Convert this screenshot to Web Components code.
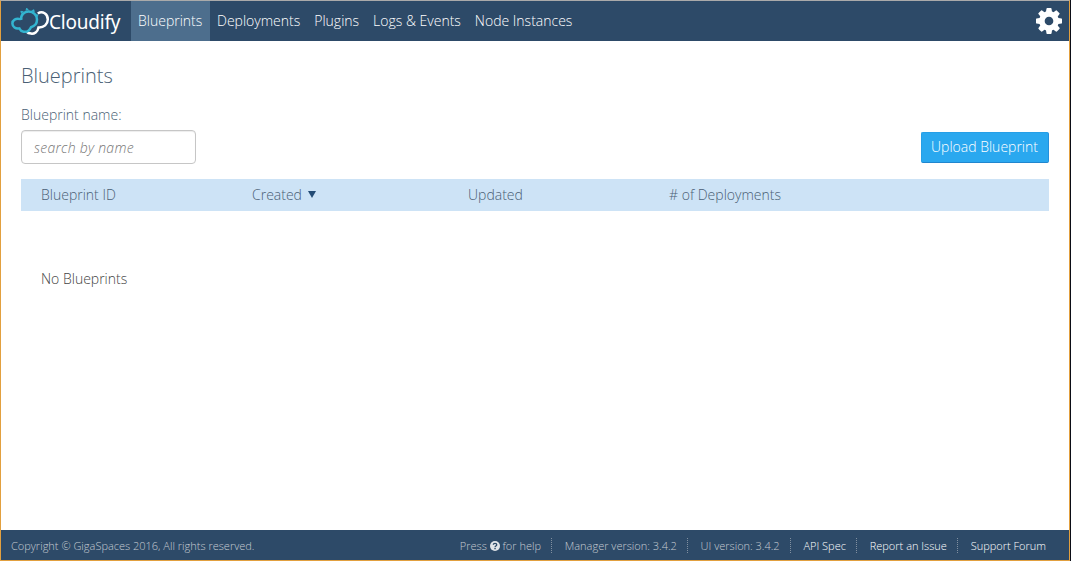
<!DOCTYPE html>
<html lang="en">
<head>
<meta charset="utf-8">
<title>Cloudify</title>
<style>
html,body{margin:0;height:100%;overflow:hidden;background:#fff}
body{font-family:"Open Sans","Noto Sans",sans-serif;font-weight:300;font-size:14px;line-height:20px;color:#4a5f75}
</style>
</head>
<body>
<cloudify-app></cloudify-app>
<script>
function define(name, html) {
  const template = document.createElement('template');
  template.innerHTML = html;
  customElements.define(name, class extends HTMLElement {
    connectedCallback() {
      if (this.shadowRoot) return;
      this.attachShadow({ mode: 'open' }).append(template.content.cloneNode(true));
    }
  });
}

define('cloudify-logo', `
<style>
:host{display:flex;align-items:center;width:120px;height:40px;padding-left:10px;color:#fff;box-sizing:content-box}
svg{flex:none;width:39px;height:30px}
span{font:400 19px/38px "Noto Sans","Open Sans",sans-serif;margin:2px 0 0 -1px;letter-spacing:-.2px}
</style>
<svg viewBox="0 0 39 30" fill="none">
  <path d="M26.800 7.500C31.500 4.400 37 8 36.800 13.500c-.1 4.700-3.800 8.300-9.300 8-.9 4.500-4.200 6.500-7.500 6.100-2-.2-3.400-.9-4.400-2" stroke="#fff" stroke-width="2.500"/>
  <path d="M10.300 14C9.300 8.800 13.300 5.500 17.700 5.500c4.700 0 8.300 3.600 8.300 8 0 4.300-2.800 6.800-6 7.700-1.500 3.200-4.200 5-7.300 4.500-2-.4-3.500-1.500-4.300-3.300C4.700 23.300 1.400 21 1.400 17.500c0-3.500 3.300-5.500 7.800-4.400" stroke="#33b5d1" stroke-width="2.500"/>
  <path d="M10.500 7.500 9.800 5.300l2.700.4M14.900 4.500l.8-2.400 1.900 2.200M20.500 4.900l2.400-1.200.4 2.500M25 8.700l2 .2-1 1.900" fill="#33b5d1" stroke="#33b5d1" stroke-width=".8"/>
</svg><span>Cloudify</span>`);

define('nav-item', `
<style>
:host{display:block;box-sizing:border-box;height:40px;padding:0 7px;line-height:39px;color:#fff;font-size:14px;white-space:nowrap}
:host([active]){background:#4d6e8d;width:79px}
</style><slot></slot>`);

define('gear-icon', `
<style>:host{display:block;width:26px;height:26px}svg{display:block}</style>
<svg width="26" height="26" viewBox="0 0 1536 1536"><path fill="#fff" d="M1024 768q0-106-75-181t-181-75-181 75-75 181 75 181 181 75 181-75 75-181zm512-109v222q0 12-8 23t-20 13l-185 28q-19 54-39 91 35 50 107 138 10 12 10 25t-9 23q-27 37-99 108t-94 71q-12 0-26-9l-138-108q-44 23-91 38-16 136-29 186-7 28-36 28H657q-14 0-24.500-8.500T621 1506l-28-184q-49-16-90-37l-141 107q-10 9-25 9-14 0-25-11-126-114-165-168-7-10-7-23 0-12 8-23 15-21 51-66.500t54-70.500q-27-50-41-99L29 913q-13-2-21-12.500T0 877V655q0-12 8-23t19-13l186-28q14-46 39-92-40-57-107-138-10-12-10-24 0-10 9-23 26-36 98.500-107.500T337 135q13 0 26 10l138 107q44-23 91-38 16-136 29-186 7-28 36-28h222q14 0 24.500 8.500T915 30l28 184q49 16 90 37l142-107q9-9 24-9 13 0 25 10 129 119 165 170 7 8 7 22 0 12-8 23-15 21-51 66.500t-54 70.500q26 50 41 98l183 28q13 2 21 12.500t8 23.500z"/></svg>`);

define('app-header', `
<style>
:host{display:flex;height:40px;flex:none;background:#2d4a68}
nav{display:flex;flex:1}
gear-icon{margin:7px 7px 0 0}
</style>
<cloudify-logo></cloudify-logo>
<nav><slot></slot></nav>
<gear-icon></gear-icon>`);

define('search-field', `
<style>
:host{display:block;width:175px}
label{display:block;height:20px;margin-bottom:5px}
input{display:block;box-sizing:border-box;width:175px;height:34px;border:1px solid #c6c6c6;border-radius:4px;padding:0 12px;background:#fff;font:inherit;outline:0;box-shadow:inset 0 1px 1px rgba(0,0,0,.075)}
input::placeholder{color:#777;opacity:1;font-style:italic;letter-spacing:.27px}
</style>
<label><slot></slot></label><input type="text" placeholder="search by name">`);

define('action-button', `
<style>
:host{display:block}
button{display:block;box-sizing:border-box;width:128px;height:31px;padding:0 1px 2px 0;border:1px solid #269fe7;border-bottom-color:#2086ce;border-right-color:#2490dc;border-radius:2px;background:#2aa8ef;color:#fff;font:inherit;line-height:27px}
</style><button><slot></slot></button>`);

define('blueprint-table', `
<style>
:host{display:block}
.head{display:grid;grid-template-columns:211px 216px 201px 1fr;height:32px;padding-left:20px;background:#cde3f6;line-height:32px}
.arrow{display:inline-block;width:0;height:0;border:4px solid transparent;border-top:7px solid #234b75;border-bottom:0;margin-left:6px;vertical-align:2px}
.empty{padding:58px 20px 0;color:#444}
</style>
<div class="head"><span>Blueprint ID</span><span>Created<i class="arrow"></i></span><span>Updated</span><span># of Deployments</span></div>
<div class="empty"><slot></slot></div>`);

define('blueprints-page', `
<style>
:host{display:block;flex:1;padding:21px 20px 0}
h1{margin:0 0 15px;font-size:20px;line-height:28px;font-weight:300}
.tools{display:flex;justify-content:space-between;align-items:flex-end;margin-bottom:15px}
action-button{margin-bottom:1px}
</style>
<h1>Blueprints</h1>
<div class="tools"><search-field>Blueprint name:</search-field><action-button>Upload Blueprint</action-button></div>
<blueprint-table>No Blueprints</blueprint-table>`);

define('footer-item', `
<style>
:host{display:block;height:15px;line-height:15px;padding:0 10px 0 12.800px;border-left:1px dotted #8190a0;white-space:nowrap;color:#c5cbd2}
:host([first]){border:0}
:host([link]){color:#fff}
</style><slot></slot>`);

define('help-icon', `
<style>:host{display:inline-block;width:10px;height:10px;vertical-align:-1px}svg{display:block}</style>
<svg width="10" height="10" viewBox="0 0 20 20"><circle cx="10" cy="10" r="10" fill="#e0e4e8"/><path d="M6.500 7.600C6.700 3.500 13.500 3.700 13.500 7.500c0 2.700-3.400 2.400-3.400 5" fill="none" stroke="#2d4a68" stroke-width="2.600"/><path d="M8.700 14h2.800v2.500H8.700z" fill="#2d4a68"/></svg>`);

define('app-footer', `
<style>
:host{display:flex;flex:none;height:30px;box-sizing:border-box;padding:8px 13px 0 10px;background:#2d4a68;font-size:11px;line-height:15px;color:#c5cbd2}
.copy{flex:1}
</style>
<span class="copy">Copyright © GigaSpaces 2016, All rights reserved.</span>
<footer-item first>Press <help-icon></help-icon> for help</footer-item>
<footer-item>Manager version: 3.4.2</footer-item>
<footer-item>UI version: 3.4.2</footer-item>
<footer-item link>API Spec</footer-item>
<footer-item link>Report an Issue</footer-item>
<footer-item link>Support Forum</footer-item>`);

define('cloudify-app', `
<style>
:host{display:flex;background:#0b0d16;width:1071px;height:561px}
.frame{display:flex;flex-direction:column;box-sizing:border-box;width:1070px;height:561px;border:1px solid #e2a03f;border-top-color:#aaa;background:#fff}
</style>
<div class="frame">
<app-header><nav-item active>Blueprints</nav-item><nav-item>Deployments</nav-item><nav-item>Plugins</nav-item><nav-item>Logs &amp; Events</nav-item><nav-item>Node Instances</nav-item></app-header>
<blueprints-page></blueprints-page>
<app-footer></app-footer>
</div>`);
</script>
</body>
</html>
